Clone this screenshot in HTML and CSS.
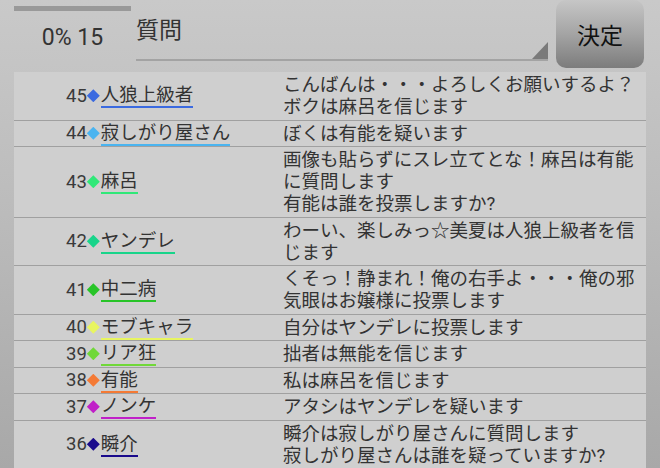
FILE: index.html
```html
<!DOCTYPE html>
<html lang="ja">
<head>
<meta charset="utf-8">
<title>質問</title>
<link rel="stylesheet" href="styles.css">
</head>
<body>
<div class="header">
  <div class="status">
    <div class="bar"></div>
    <div class="count">0% 15</div>
  </div>
  <div class="field">
    <span class="field-text">質問</span>
    <span class="corner"></span>
  </div>
  <div class="button">決定</div>
</div>
<div class="log">
  <div class="row">
    <div class="who"><span class="num">45</span><span class="dia c45"></span><span class="name u45">人狼上級者</span></div>
    <div class="msg">こんばんは・・・よろしくお願いするよ？<br>ボクは麻呂を信じます</div>
  </div>
  <div class="row">
    <div class="who"><span class="num">44</span><span class="dia c44"></span><span class="name u44">寂しがり屋さん</span></div>
    <div class="msg">ぼくは有能を疑います</div>
  </div>
  <div class="row">
    <div class="who"><span class="num">43</span><span class="dia c43"></span><span class="name u43">麻呂</span></div>
    <div class="msg">画像も貼らずにスレ立てとな！麻呂は有能<br>に質問します<br>有能は誰を投票しますか?</div>
  </div>
  <div class="row">
    <div class="who"><span class="num">42</span><span class="dia c42"></span><span class="name u42">ヤンデレ</span></div>
    <div class="msg">わーい、楽しみっ☆美夏は人狼上級者を信<br>じます</div>
  </div>
  <div class="row">
    <div class="who"><span class="num">41</span><span class="dia c41"></span><span class="name u41">中二病</span></div>
    <div class="msg">くそっ！静まれ！俺の右手よ・・・俺の邪<br>気眼はお嬢様に投票します</div>
  </div>
  <div class="row">
    <div class="who"><span class="num">40</span><span class="dia c40"></span><span class="name u40">モブキャラ</span></div>
    <div class="msg">自分はヤンデレに投票します</div>
  </div>
  <div class="row">
    <div class="who"><span class="num">39</span><span class="dia c39"></span><span class="name u39">リア狂</span></div>
    <div class="msg">拙者は無能を信じます</div>
  </div>
  <div class="row">
    <div class="who"><span class="num">38</span><span class="dia c38"></span><span class="name u38">有能</span></div>
    <div class="msg">私は麻呂を信じます</div>
  </div>
  <div class="row">
    <div class="who"><span class="num">37</span><span class="dia c37"></span><span class="name u37">ノンケ</span></div>
    <div class="msg">アタシはヤンデレを疑います</div>
  </div>
  <div class="row">
    <div class="who"><span class="num">36</span><span class="dia c36"></span><span class="name u36">瞬介</span></div>
    <div class="msg">瞬介は寂しがり屋さんに質問します<br>寂しがり屋さんは誰を疑っていますか?</div>
  </div>
</div>
</body>
</html>
```
FILE: styles.css
```css
html, body {
  margin: 0;
  padding: 0;
}
body {
  width: 660px;
  height: 468px;
  overflow: hidden;
  background: linear-gradient(to bottom, #c9c9c9 0%, #bdbdbd 40%, #a8a8a8 100%);
  font-family: Roboto, "Noto Sans CJK JP", sans-serif;
  color: #333333;
}
.header {
  display: flex;
  height: 72px;
  padding-left: 14px;
  box-sizing: border-box;
}
.status {
  width: 117px;
  display: flex;
  flex-direction: column;
  align-items: center;
}
.bar {
  align-self: stretch;
  margin-top: 6px;
  height: 5px;
  background: #999999;
}
.count {
  margin-top: 13px;
  font-size: 23px;
  line-height: 27px;
  color: #333333;
}
.field {
  margin-left: 5px;
  width: 412px;
  height: 61px;
  box-sizing: border-box;
  border-bottom: 2px solid #a3a3a3;
  display: flex;
  justify-content: space-between;
  align-items: flex-end;
}
.field-text {
  align-self: flex-start;
  margin-top: 17px;
  font-size: 23px;
  line-height: 27px;
  color: #333333;
}
.corner {
  width: 16px;
  height: 17px;
  background: #7a7a7a;
  clip-path: polygon(100% 0, 100% 100%, 0 100%);
}
.button {
  margin-left: 8px;
  width: 88px;
  height: 68px;
  border-radius: 10px;
  background: linear-gradient(to bottom, #c6c6c6 0%, #a4a4a4 50%, #7c7c7c 100%);
  display: flex;
  align-items: center;
  justify-content: center;
  font-size: 23px;
  color: #111111;
}
.log {
  margin: 0 14px;
  background: #cfcfcf;
}
.row {
  display: grid;
  grid-template-columns: 269px 1fr;
  border-bottom: 1px solid #a0a0a0;
}
.who {
  padding-left: 52px;
  display: flex;
  align-items: center;
  font-size: 18.5px;
}
.num {
  line-height: 22px;
  color: #3a3a3a;
}
.dia {
  width: 13px;
  height: 13px;
  margin: 0 1px 0 0;
  clip-path: polygon(50% 0, 100% 50%, 50% 100%, 0 50%);
}
.name {
  line-height: 20px;
  padding-bottom: 1px;
  border-bottom: 2px solid;
  color: #333333;
  margin-top: 2px;
}
.msg {
  font-size: 18.5px;
  line-height: 22px;
  padding: 2px 0 1.5px 0;
  color: #333333;
  white-space: nowrap;
}
.c45 { background: #3b6ae0; } .u45 { border-color: #3b6ae0; }
.c44 { background: #4ab4f0; } .u44 { border-color: #4ab4f0; }
.c43 { background: #30e878; } .u43 { border-color: #30e878; }
.c42 { background: #18d48a; } .u42 { border-color: #18d48a; }
.c41 { background: #28c428; } .u41 { border-color: #28c428; }
.c40 { background: #e8f560; } .u40 { border-color: #e8f560; }
.c39 { background: #70d838; } .u39 { border-color: #70d838; }
.c38 { background: #f47a35; } .u38 { border-color: #f47a35; }
.c37 { background: #c020c8; } .u37 { border-color: #c020c8; }
.c36 { background: #1a0a8c; } .u36 { border-color: #1a0a8c; }
```
